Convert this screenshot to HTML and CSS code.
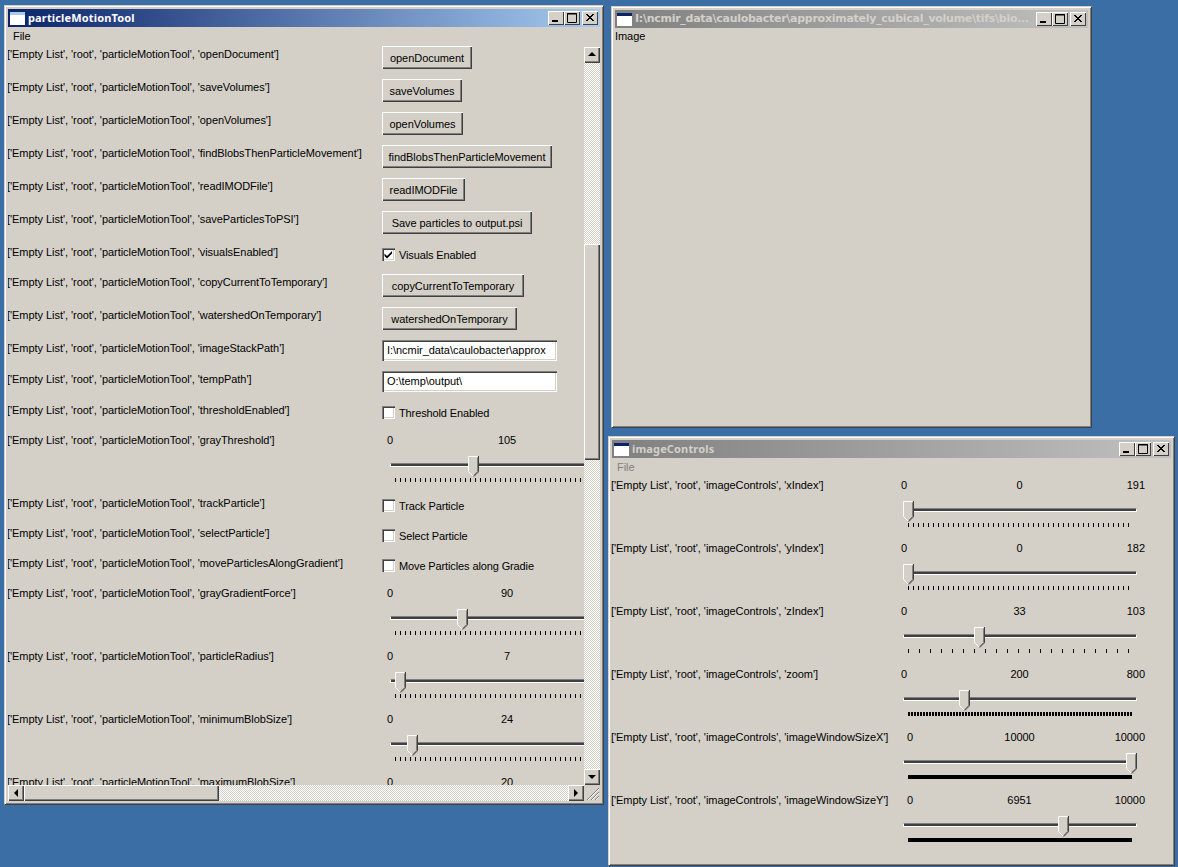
FILE: index.html
```html
<!doctype html>
<html>
<head>
	<title>particleMotionTool</title>
	<meta charset="utf-8" />
	<link rel="stylesheet" href="styles.css">
</head>

<body>
	<!-- left window -->
	<div class="win" id="toolwin">
		<div class="titlebar active">
			<svg class="appicon" width="15" height="13" viewBox="0 0 15 13"><rect width="15" height="13" fill="#fff"/><rect width="15" height="3" fill="#a6caf0"/></svg>
			<span class="wintitle">particleMotionTool</span>
			<div class="winbtns">
				<div class="winbtn"><svg width="16" height="14"><rect x="4" y="9" width="6" height="2" fill="#000"/></svg></div>
				<div class="winbtn"><svg width="16" height="14"><path d="M3.5 2.5h9v9h-9z M3 3h10" fill="none" stroke="#000"/></svg></div>
				<div class="winbtn close"><svg width="16" height="14"><path d="M4 3l7 7M5 3l7 7M11 3l-7 7M12 3l-7 7" stroke="#000" fill="none"/></svg></div>
			</div>
		</div>
		<div class="menubar"><span>File</span></div>
		<div class="scrollarea">
			<div class="viewport">
				<div class="row h33"><div class="lbl">['Empty List', 'root', 'particleMotionTool', 'openDocument']</div><button class="btn w90">openDocument</button></div>
				<div class="row h33"><div class="lbl">['Empty List', 'root', 'particleMotionTool', 'saveVolumes']</div><button class="btn w80">saveVolumes</button></div>
				<div class="row h33"><div class="lbl">['Empty List', 'root', 'particleMotionTool', 'openVolumes']</div><button class="btn w81">openVolumes</button></div>
				<div class="row h33"><div class="lbl">['Empty List', 'root', 'particleMotionTool', 'findBlobsThenParticleMovement']</div><button class="btn w170">findBlobsThenParticleMovement</button></div>
				<div class="row h33"><div class="lbl">['Empty List', 'root', 'particleMotionTool', 'readIMODFile']</div><button class="btn w83">readIMODFile</button></div>
				<div class="row h33"><div class="lbl">['Empty List', 'root', 'particleMotionTool', 'saveParticlesToPSI']</div><button class="btn w150">Save particles to output.psi</button></div>
				<div class="row h30"><div class="lbl">['Empty List', 'root', 'particleMotionTool', 'visualsEnabled']</div><div class="check"><span class="box"><svg width="9" height="9" viewBox="0 0 9 9"><path d="M0.5 3.5l2.5 2.5 5-5v2.5l-5 5-2.5-2.5z" fill="#000"/></svg></span>Visuals Enabled</div></div>
				<div class="row h33"><div class="lbl">['Empty List', 'root', 'particleMotionTool', 'copyCurrentToTemporary']</div><button class="btn w142">copyCurrentToTemporary</button></div>
				<div class="row h33"><div class="lbl">['Empty List', 'root', 'particleMotionTool', 'watershedOnTemporary']</div><button class="btn w135">watershedOnTemporary</button></div>
				<div class="row h31"><div class="lbl">['Empty List', 'root', 'particleMotionTool', 'imageStackPath']</div><div class="field">I:\ncmir_data\caulobacter\approx</div></div>
				<div class="row h31"><div class="lbl">['Empty List', 'root', 'particleMotionTool', 'tempPath']</div><div class="field">O:\temp\output\</div></div>
				<div class="row h30"><div class="lbl">['Empty List', 'root', 'particleMotionTool', 'thresholdEnabled']</div><div class="check"><span class="box"></span>Threshold Enabled</div></div>
				<div class="row h63"><div class="lbl">['Empty List', 'root', 'particleMotionTool', 'grayThreshold']</div>
					<div class="slider wide"><div class="nums"><span class="min">0</span><span class="mid">105</span><span></span></div><div class="track"><div class="groove"></div><svg class="thumb" style="left:78px" width="11" height="21" viewBox="0 0 11 21"><use href="#thumbshape"/></svg></div><div class="ticks t4"></div></div></div>
				<div class="row h30"><div class="lbl">['Empty List', 'root', 'particleMotionTool', 'trackParticle']</div><div class="check"><span class="box"></span>Track Particle</div></div>
				<div class="row h30"><div class="lbl">['Empty List', 'root', 'particleMotionTool', 'selectParticle']</div><div class="check"><span class="box"></span>Select Particle</div></div>
				<div class="row h30"><div class="lbl">['Empty List', 'root', 'particleMotionTool', 'moveParticlesAlongGradient']</div><div class="check"><span class="box"></span>Move Particles along Gradie</div></div>
				<div class="row h63"><div class="lbl">['Empty List', 'root', 'particleMotionTool', 'grayGradientForce']</div>
					<div class="slider wide"><div class="nums"><span class="min">0</span><span class="mid">90</span><span></span></div><div class="track"><div class="groove"></div><svg class="thumb" style="left:67px" width="11" height="21" viewBox="0 0 11 21"><use href="#thumbshape"/></svg></div><div class="ticks t4"></div></div></div>
				<div class="row h63"><div class="lbl">['Empty List', 'root', 'particleMotionTool', 'particleRadius']</div>
					<div class="slider wide"><div class="nums"><span class="min">0</span><span class="mid">7</span><span></span></div><div class="track"><div class="groove"></div><svg class="thumb" style="left:5px" width="11" height="21" viewBox="0 0 11 21"><use href="#thumbshape"/></svg></div><div class="ticks t4"></div></div></div>
				<div class="row h63"><div class="lbl">['Empty List', 'root', 'particleMotionTool', 'minimumBlobSize']</div>
					<div class="slider wide"><div class="nums"><span class="min">0</span><span class="mid">24</span><span></span></div><div class="track"><div class="groove"></div><svg class="thumb" style="left:17px" width="11" height="21" viewBox="0 0 11 21"><use href="#thumbshape"/></svg></div><div class="ticks t4"></div></div></div>
				<div class="row h63"><div class="lbl">['Empty List', 'root', 'particleMotionTool', 'maximumBlobSize']</div>
					<div class="slider wide"><div class="nums"><span class="min">0</span><span class="mid">20</span><span></span></div></div></div>
			</div>
			<div class="vscroll">
				<div class="sbtn"><svg width="16" height="16"><path d="M8 5l4 4H4z" fill="#000"/></svg></div>
				<div class="strack">
					<div class="dither vgap1"></div>
					<div class="sthumb vthumb"></div>
					<div class="dither fill"></div>
				</div>
				<div class="sbtn"><svg width="16" height="16"><path d="M4 6h8l-4 4z" fill="#000"/></svg></div>
			</div>
			<div class="hscroll">
				<div class="sbtn"><svg width="16" height="16"><path d="M10 4v8L6 8z" fill="#000"/></svg></div>
				<div class="sthumb hthumb"></div>
				<div class="dither fill"></div>
				<div class="sbtn"><svg width="16" height="16"><path d="M6 4v8l4-4z" fill="#000"/></svg></div>
			</div>
			<div class="grip"><svg width="16" height="16"><path d="M15 3L3 15M15 7l-8 8M15 11l-4 4" stroke="#808080" fill="none"/><path d="M15 4L4 15M15 8l-7 7M15 12l-3 3" stroke="#fff" fill="none"/></svg></div>
		</div>
	</div>

	<!-- image window -->
	<div class="win" id="imagewin">
		<div class="titlebar inactive">
			<svg class="appicon" width="15" height="13" viewBox="0 0 15 13"><rect width="15" height="13" fill="#fff"/><rect width="15" height="3" fill="#0a246a"/></svg>
			<span class="wintitle pathtitle">I:\ncmir_data\caulobacter\approximately_cubical_volume\tifs\blo...</span>
			<div class="winbtns">
				<div class="winbtn"><svg width="16" height="14"><rect x="4" y="9" width="6" height="2" fill="#000"/></svg></div>
				<div class="winbtn"><svg width="16" height="14"><path d="M3.5 2.5h9v9h-9z M3 3h10" fill="none" stroke="#000"/></svg></div>
				<div class="winbtn close"><svg width="16" height="14"><path d="M4 3l7 7M5 3l7 7M11 3l-7 7M12 3l-7 7" stroke="#000" fill="none"/></svg></div>
			</div>
		</div>
		<div class="imgname">Image</div>
	</div>

	<!-- controls window -->
	<div class="win" id="controlswin">
		<div class="titlebar inactive">
			<svg class="appicon" width="15" height="13" viewBox="0 0 15 13"><rect width="15" height="13" fill="#fff"/><rect width="15" height="3" fill="#0a246a"/></svg>
			<span class="wintitle">imageControls</span>
			<div class="winbtns">
				<div class="winbtn"><svg width="16" height="14"><rect x="4" y="9" width="6" height="2" fill="#000"/></svg></div>
				<div class="winbtn"><svg width="16" height="14"><path d="M3.5 2.5h9v9h-9z M3 3h10" fill="none" stroke="#000"/></svg></div>
				<div class="winbtn close"><svg width="16" height="14"><path d="M4 3l7 7M5 3l7 7M11 3l-7 7M12 3l-7 7" stroke="#000" fill="none"/></svg></div>
			</div>
		</div>
		<div class="menubar off"><span>File</span></div>
		<div class="ctlrows">
			<div class="ctl"><div class="lbl">['Empty List', 'root', 'imageControls', 'xIndex']</div>
				<div class="slider"><div class="nums"><span class="min">0</span><span class="mid">0</span><span class="max">191</span></div><div class="track"><div class="groove"></div><svg class="thumb" style="left:0px" width="11" height="21" viewBox="0 0 11 21"><use href="#thumbshape"/></svg></div><div class="ticks t4"></div></div></div>
			<div class="ctl"><div class="lbl">['Empty List', 'root', 'imageControls', 'yIndex']</div>
				<div class="slider"><div class="nums"><span class="min">0</span><span class="mid">0</span><span class="max">182</span></div><div class="track"><div class="groove"></div><svg class="thumb" style="left:0px" width="11" height="21" viewBox="0 0 11 21"><use href="#thumbshape"/></svg></div><div class="ticks t4"></div></div></div>
			<div class="ctl"><div class="lbl">['Empty List', 'root', 'imageControls', 'zIndex']</div>
				<div class="slider"><div class="nums"><span class="min">0</span><span class="mid">33</span><span class="max">103</span></div><div class="track"><div class="groove"></div><svg class="thumb" style="left:71px" width="11" height="21" viewBox="0 0 11 21"><use href="#thumbshape"/></svg></div><div class="ticks t8"></div></div></div>
			<div class="ctl"><div class="lbl">['Empty List', 'root', 'imageControls', 'zoom']</div>
				<div class="slider"><div class="nums"><span class="min">0</span><span class="mid">200</span><span class="max">800</span></div><div class="track"><div class="groove"></div><svg class="thumb" style="left:56px" width="11" height="21" viewBox="0 0 11 21"><use href="#thumbshape"/></svg></div><div class="ticks t2"></div></div></div>
			<div class="ctl"><div class="lbl">['Empty List', 'root', 'imageControls', 'imageWindowSizeX']</div>
				<div class="slider far"><div class="nums"><span class="min">0</span><span class="mid">10000</span><span class="max">10000</span></div><div class="track"><div class="groove"></div><svg class="thumb" style="left:223px" width="11" height="21" viewBox="0 0 11 21"><use href="#thumbshape"/></svg></div><div class="ticks solid"></div></div></div>
			<div class="ctl"><div class="lbl">['Empty List', 'root', 'imageControls', 'imageWindowSizeY']</div>
				<div class="slider far"><div class="nums"><span class="min">0</span><span class="mid">6951</span><span class="max">10000</span></div><div class="track"><div class="groove"></div><svg class="thumb" style="left:155px" width="11" height="21" viewBox="0 0 11 21"><use href="#thumbshape"/></svg></div><div class="ticks solid"></div></div></div>
		</div>
	</div>

	<svg class="defs" width="0" height="0"><defs>
		<g id="thumbshape">
			<path d="M0 0h11v16l-5 5-6-6z" fill="#d4d0c8"/>
			<path d="M0.5 15.5V0.5H9.5" fill="none" stroke="#fff"/>
			<path d="M9.5 1.5V15.5L5.5 19.5" fill="none" stroke="#808080"/>
			<path d="M10.5 0V15.8L5.8 20.5" fill="none" stroke="#404040"/>
			<path d="M0.5 15.5L5 20" fill="none" stroke="#fff"/>
		</g>
	</defs></svg>
</body>
</html>
```

FILE: styles.css
```css
body {
	margin:0;
	width:1178px;
	height:867px;
	overflow:hidden;
	position:relative;
	background-color:#3a6ea5;
	font-family:"Liberation Sans", sans-serif;
	font-size:11px;
	letter-spacing:-.05px;
	color:black;
}

.defs {
	position:absolute;
}

/* windows sit on a free desktop */
.win {
	position:absolute;
	box-sizing:border-box;
	display:flex;
	flex-direction:column;
	background-color:#d4d0c8;
	padding:3px;
	border:1px solid;
	border-color:#d4d0c8 #404040 #404040 #d4d0c8;
	box-shadow:inset 1px 1px 0 #fff, inset -1px -1px 0 #808080;
}

#toolwin {
	left:4px;
	top:5px;
	width:600px;
	height:800px;
}

#imagewin {
	left:611px;
	top:6px;
	width:481px;
	height:422px;
}

#controlswin {
	left:608px;
	top:436px;
	width:567px;
	height:430px;
}

.titlebar {
	flex:none;
	height:18px;
	display:flex;
	align-items:center;
	padding:0 2px;
	overflow:hidden;
}

.active {
	background:linear-gradient(to right, #0a246a, #a6caf0);
}

.inactive {
	background:linear-gradient(to right, #808080, #c0c0c0);
}

.appicon {
	flex:none;
	margin-right:3px;
}

.wintitle {
	flex:1;
	min-width:0;
	margin-top:-2px;
	font-family:"Noto Sans", sans-serif;
	font-weight:bold;
	font-size:11px;
	letter-spacing:.15px;
	color:white;
	white-space:nowrap;
	overflow:hidden;
}

.inactive .wintitle {
	color:#d4d0c8;
}

.pathtitle {
	font-family:"DejaVu Sans", sans-serif;
	letter-spacing:-.27px;
}

.winbtns {
	flex:none;
	display:flex;
}

.winbtn {
	box-sizing:border-box;
	width:16px;
	height:14px;
	background-color:#d4d0c8;
	box-shadow:inset 1px 1px 0 #fff, inset -1px -1px 0 #404040;
}

.close {
	margin-left:2px;
}

.menubar {
	flex:none;
	height:17px;
	line-height:19px;
	padding-left:2px;
}

.menubar span {
	padding:0 3px;
}

.off {
	color:#808080;
}

.imgname {
	line-height:17px;
}

/* scroll area of the tool window */
.scrollarea {
	flex:1;
	min-height:0;
	display:grid;
	grid-template-columns:576px 16px;
	grid-template-rows:741px 16px;
}

.viewport {
	overflow:hidden;
}

.row {
	display:flex;
	align-items:flex-start;
	padding-top:2px;
	box-sizing:border-box;
}

.h30 { height:30px; }
.h31 { height:31px; }
.h33 { height:33px; }
.h63 { height:63px; }

.lbl {
	white-space:nowrap;
	line-height:15px;
	margin-top:1px;
}

.row .lbl {
	width:375px;
	flex:none;
	margin-left:-1px;
}

.btn {
	box-sizing:border-box;
	height:23px;
	padding:0;
	border:0;
	font:inherit;
	letter-spacing:inherit;
	color:black;
	background-color:#d4d0c8;
	box-shadow:inset 1px 1px 0 #fff, inset -1px -1px 0 #404040, inset -2px -2px 0 #808080;
}

.w80 { width:80px; }
.w81 { width:81px; }
.w83 { width:83px; }
.w90 { width:90px; }
.w135 { width:135px; }
.w142 { width:142px; }
.w150 { width:150px; }
.w170 { width:170px; }

.check {
	display:flex;
	align-items:center;
	height:13px;
	margin-top:4px;
	gap:3px;
	letter-spacing:-.12px;
	white-space:nowrap;
}

.box {
	box-sizing:border-box;
	width:13px;
	height:13px;
	margin-right:1px;
	display:flex;
	align-items:center;
	justify-content:center;
	background-color:white;
	box-shadow:inset 1px 1px 0 #808080, inset 2px 2px 0 #404040, inset -1px -1px 0 #fff, inset -2px -2px 0 #d4d0c8;
}

.field {
	box-sizing:border-box;
	width:175px;
	height:21px;
	line-height:21px;
	padding-left:5px;
	background-color:white;
	white-space:nowrap;
	overflow:hidden;
	box-shadow:inset 1px 1px 0 #808080, inset 2px 2px 0 #404040, inset -1px -1px 0 #fff, inset -2px -2px 0 #d4d0c8;
}

/* sliders */
.slider {
	flex:none;
	width:234px;
}

.slider.wide {
	width:300px;
	margin-left:5px;
}

.nums {
	display:grid;
	grid-template-columns:1fr auto 1fr;
	height:15px;
	line-height:15px;
	margin:1px -8px 0 -9px;
}

.min {
	padding-left:7px;
}

.far .min {
	padding-left:13px;
}

.wide .nums {
	margin:1px 0 0;
	width:240px;
}

.wide .min {
	padding-left:0;
}

.max {
	text-align:right;
}

.wide .track {
	margin-left:3px;
}

.track {
	position:relative;
	height:21px;
	margin-top:8px;
}

.groove {
	box-sizing:border-box;
	position:absolute;
	left:0;
	right:0;
	top:7px;
	height:4px;
	background-color:#404040;
	border-top:1px solid #808080;
	border-bottom:1px solid #fff;
	border-left:1px solid #fff;
	border-right:1px solid #fff;
}

.thumb {
	position:absolute;
	top:0;
}

.ticks {
	height:4px;
	margin:1px 5px 0;
	background-size:4px 4px;
	background-image:linear-gradient(to right, #000 1px, transparent 1px);
}

.wide .ticks {
	margin-left:8px;
}

.t4 { background-size:5px 4px; }
.t8 { background-size:11px 4px; }
.t2 { background-size:3px 4px; background-image:linear-gradient(to right, #000 2px, transparent 2px); }
.solid { background-image:none; background-color:#000; }

/* scrollbars */
.vscroll {
	display:flex;
	flex-direction:column;
	padding-top:3px;
}

.hscroll {
	display:flex;
}

.sbtn {
	flex:none;
	box-sizing:border-box;
	width:16px;
	height:16px;
	background-color:#d4d0c8;
	box-shadow:inset 1px 1px 0 #fff, inset -1px -1px 0 #404040, inset -2px -2px 0 #808080;
}

.strack {
	flex:1;
	display:flex;
	flex-direction:column;
}

.dither {
	background:repeating-conic-gradient(#fff 0 25%, #d4d0c8 0 50%) 0 0/2px 2px;
}

.fill {
	flex:1;
}

.vgap1 {
	height:181px;
}

.sthumb {
	flex:none;
	box-sizing:border-box;
	background-color:#d4d0c8;
	box-shadow:inset 1px 1px 0 #fff, inset -1px -1px 0 #404040, inset -2px -2px 0 #808080;
}

.vthumb {
	height:216px;
}

.hthumb {
	width:195px;
}

.grip {
	height:16px;
}

/* controls window rows */
.ctlrows {
	display:flex;
	flex-direction:column;
}

.ctl {
	display:flex;
	height:63px;
	padding-top:2px;
	box-sizing:border-box;
}

.ctl .lbl {
	width:292px;
	flex:none;
	margin-left:-1px;
}
```
